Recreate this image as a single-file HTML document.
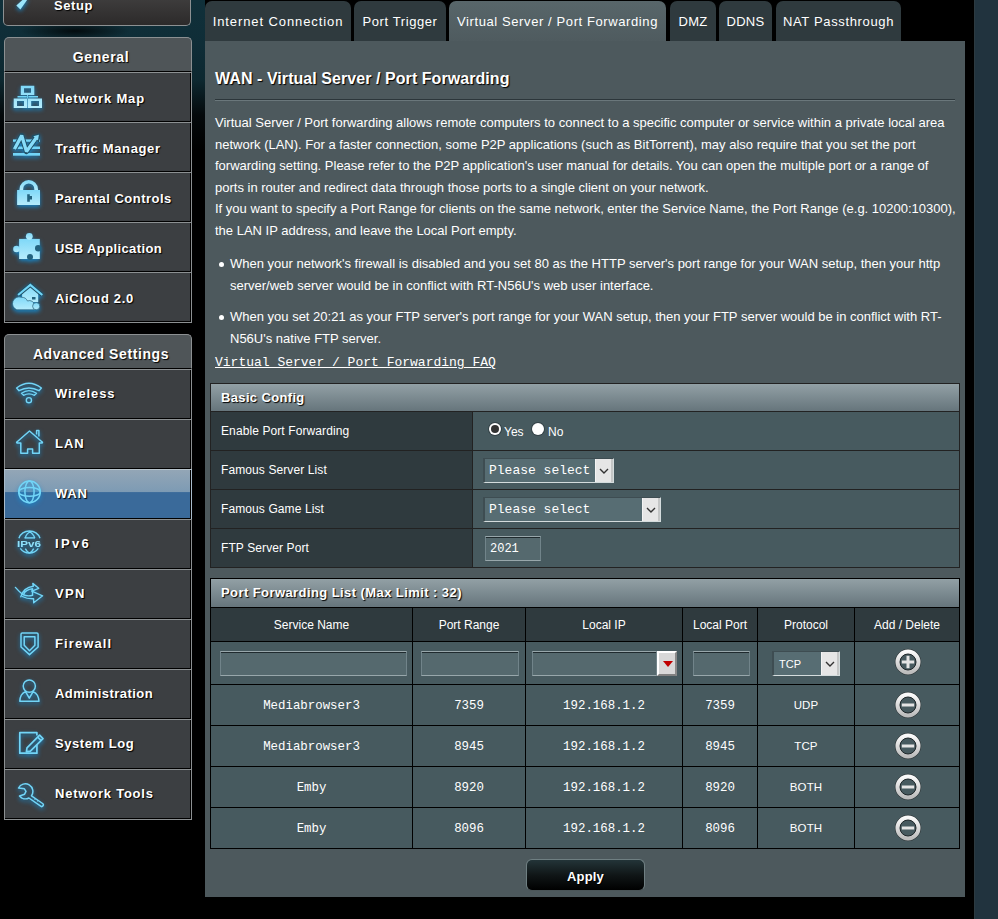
<!DOCTYPE html>
<html><head><meta charset="utf-8">
<style>
*{box-sizing:border-box;}
html,body{margin:0;padding:0;}
body{width:998px;height:919px;overflow:hidden;position:relative;background:#000;font-family:"Liberation Sans",sans-serif;color:#fff;}
.abs{position:absolute;}
#glow{left:0;top:0;width:205px;height:200px;background:radial-gradient(ellipse 55px 9px at 75px 31px,rgba(0,0,0,0.75),rgba(0,0,0,0)),linear-gradient(#10303a 0px,#0f2d37 45px,#0d2830 80px,#04090b 115px,#000 150px);}
#rstrip{left:974px;top:0;width:24px;height:919px;background:#21333e;border-left:1px solid #2c3a40;}
/* menu */
.setup{left:3px;top:-20px;width:188px;height:46px;border:1px solid #8c9092;border-top:none;border-radius:0 0 5px 5px;background:linear-gradient(#4b4a4a,#2c2a2a);}
.grp{left:4px;width:188px;}
.ghead{position:relative;height:35px;border:1px solid #8c9092;border-bottom:1px solid #000;border-radius:5px 5px 0 0;background:#4f5558;text-align:center;font-weight:bold;font-size:14px;line-height:16px;padding-top:11px;padding-left:6px;letter-spacing:0.6px;text-shadow:1px 1px 1px #000;}
.item{position:relative;height:50px;border-top:1px solid #8c9092;border-left:1px solid #8c9092;border-right:1px solid #8c9092;background:#3c3f42;box-shadow:inset -1px -1px 0 #000;}
.item .t{position:absolute;left:50px;top:18px;line-height:15px;font-weight:bold;font-size:13px;letter-spacing:0.45px;text-shadow:1px 1px 1px #000;white-space:nowrap;}
.item svg{position:absolute;left:-1px;top:-1px;width:50px;height:50px;overflow:visible;filter:drop-shadow(0 2px 2px rgba(20,140,210,0.9));}
.item.msel{background:linear-gradient(#93a6b6 0%,#7d9bb4 45%,#3a6a9a 46%,#3a6a9a 100%);border-top-color:#b8c4cc;border-left-color:#a9bccb;border-right-color:#a9bccb;}
.item.glast{border-bottom:1px solid #8c9092;height:51px;}
/* tabs */
.tab{top:1px;height:40px;border-radius:7px 7px 0 0;background:#2f3a3e;font-size:13px;letter-spacing:0.3px;padding-top:13px;text-align:center;white-space:nowrap;color:#fff;}
.tab.on{background:linear-gradient(#58666a 0%,#4f5b5f 100%);}
/* content */
#panel{left:205px;top:41px;width:760px;height:856px;background:#4d595d;}

.p13{font-size:13px;white-space:nowrap;}
#title{left:215px;top:69px;font-size:16px;letter-spacing:0.06px;font-weight:bold;text-shadow:1px 1px 1px #000;white-space:nowrap;line-height:20px;}
#split1{left:215px;top:99px;width:740px;height:1px;background:#2c363a;}
#split2{left:215px;top:100px;width:740px;height:1px;background:#6a777b;}
#desc{left:215px;top:112px;font-size:13px;line-height:21.55px;white-space:nowrap;}
.bul{left:230px;font-size:13px;line-height:22px;white-space:nowrap;}
.dot{width:5px;height:5px;border-radius:50%;background:#fff;}
#faq{left:215px;top:355px;font-family:"Liberation Mono",monospace;font-size:13px;line-height:16px;text-decoration:underline;white-space:nowrap;}
.tb{background:#475a5f;}
.hd{background:linear-gradient(#92a0a5,#66757c);font-weight:bold;font-size:13px;padding-left:10px;text-shadow:1px 1px 1px #000;}
.th{background:#2f3a3e;}
.ln{background:#222;}
.lnb{background:#000;}
.cell{font-size:12px;white-space:nowrap;text-align:center;line-height:15px;}
.mono{font-family:"Liberation Mono",monospace;}

.radio{width:12px;height:12px;border-radius:50%;background:#fff;box-shadow:0 0 0 1px rgba(40,50,55,0.6);}
.radio.on::after{content:"";position:absolute;left:2px;top:2px;width:8px;height:8px;border-radius:50%;background:#333;}
.sel{background:#576d73;border-top:1px solid #3e4d52;border-left:2px solid #3e4d52;border-bottom:1px solid #d4dcdd;border-right:1px solid #d4dcdd;}
.sel .v{position:absolute;left:4px;top:4px;font-family:"Liberation Mono",monospace;font-size:13px;line-height:15px;white-space:nowrap;}
.sbtn{position:absolute;top:0;right:0;width:18px;bottom:0;background:#e6e6e6;border-left:1px solid #f4f4f4;border-right:2px solid #c4c6c6;}
.inp{background:#55696e;border:1px solid #98a7ab;border-left-color:#71848a;border-right-color:#71848a;box-shadow:inset 0 1px 0 #1f2a2e;}
.xbtn{background:#d8d8d8;border-top:2px solid #fff;border-left:2px solid #fff;border-bottom:2px solid #808080;border-right:2px solid #8a8a8a;}
.apply{left:526px;top:859px;width:119px;height:32px;border-radius:6px;background:linear-gradient(#233438 0%,#101617 50%,#000 100%);border:1px solid #6f7f82;border-bottom-color:#4a5558;font-weight:bold;font-size:13px;letter-spacing:0.2px;text-align:center;line-height:33px;text-shadow:1px 1px 0 #000;}
</style></head><body>
<svg width="0" height="0" style="position:absolute"><defs><linearGradient id="icf" x1="0" y1="0" x2="0" y2="1"><stop offset="0" stop-color="#7fd8f8"/><stop offset="1" stop-color="#b5ecfc"/></linearGradient></defs></svg>
<div id="glow" class="abs"></div>
<div id="rstrip" class="abs"></div>

<div class="abs setup"><svg class="abs" style="left:10px;top:15px;overflow:visible;filter:drop-shadow(0 2px 2px rgba(20,140,210,0.9))" width="20" height="16" viewBox="0 -5 20 16"><path d="M2.3 5.4L6.4 9.5L14.5 -2H10.7Z" fill="#9be6fc"/></svg><div class="abs" style="left:50px;top:18px;line-height:15px;font-weight:bold;font-size:13px;letter-spacing:0.6px;text-shadow:1px 1px 1px #000;">Setup</div></div>
<div class="abs grp" style="top:37px;"><div class="ghead">General</div>
<div class="item"><svg viewBox="0 0 50 50"><path fill="url(#icf)" fill-rule="evenodd" d="M16.8 13.8H30.3V23H16.8ZM20 16.2V20.7H27V16.2Z M9.7 26.5H23.2V36H9.7ZM13 29V34H20V29Z M23.8 26.5H38V36H23.8ZM27.2 29V34H35V29Z"/><path fill="#72d5f7" d="M13.5 24H22.8V25.6H13.5ZM24.4 24H34V25.6H24.4ZM23.1 23H24V26.5H23.1Z"/></svg><div class="t" style="letter-spacing:0.82px;top:18px">Network Map</div></div>
<div class="item"><svg viewBox="0 0 50 50"><g fill="#72d5f7"><rect x="9" y="17.4" width="27" height="2.4"/><rect x="9" y="24.5" width="27" height="2.5"/><rect x="9" y="31" width="27" height="2.7"/></g><path d="M10.5 27L17.7 13.6L22.5 29.5L32.3 15.8" fill="none" stroke="#1f4e63" stroke-width="5.2" stroke-linejoin="round"/><path d="M28.8 14.2L35.2 12.4L34.2 19Z" fill="#1f4e63" stroke="#1f4e63" stroke-width="2" stroke-linejoin="round"/><path d="M10.5 27L17.7 13.6L22.5 29.5L32.3 15.8" fill="none" stroke="#86dcf9" stroke-width="3.3" stroke-linejoin="miter" stroke-miterlimit="1.6"/><path d="M29.3 14.3L34.9 12.7L34 18.5Z" fill="#86dcf9"/></svg><div class="t" style="letter-spacing:0.64px;top:18px">Traffic Manager</div></div>
<div class="item"><svg viewBox="0 0 50 50"><path fill="url(#icf)" fill-rule="evenodd" d="M15.5 18.2V17.25A9.25 9.25 0 0 1 34 17.25V18.2ZM19.2 18.2V17A5.55 5.55 0 0 1 30.3 17V18.2Z"/><path fill="url(#icf)" d="M13.1 18H36V33H13.1Z"/><path fill="#23627e" d="M23.2 22.2H25.8V24H28V27.5H25.8V29.8H23.2Z"/></svg><div class="t" style="letter-spacing:0.5px;top:18px">Parental Controls</div></div>
<div class="item"><svg viewBox="0 0 50 50"><g fill="url(#icf)"><rect x="15.1" y="16.9" width="20.7" height="20.1"/><circle cx="25.3" cy="14.3" r="3.4"/><circle cx="12.5" cy="27" r="3.3"/></g><circle cx="34.2" cy="26.3" r="3.2" fill="#23627e"/><circle cx="26" cy="35.1" r="3" fill="#23627e"/></svg><div class="t" style="letter-spacing:0.38px;top:18px">USB Application</div></div>
<div class="item glast"><svg viewBox="0 0 50 50"><path d="M18.1 19V30H34.2V19L26.2 12.6Z" fill="url(#icf)"/><path d="M14.1 23L26.3 13L38.3 23" fill="none" stroke="#1f4e63" stroke-width="4.2"/><path d="M14.1 23L26.3 13L38.3 23" fill="none" stroke="#72d5f7" stroke-width="2.2"/><path d="M28 25H31.5V27.5H28Z" fill="#23627e"/><g fill="url(#icf)" stroke="#2a5f77" stroke-width="0.7"><path d="M12.8 37.8A6.2 6.2 0 0 1 17.5 25.3A6.3 6.3 0 0 1 23.5 29A5 5 0 0 1 30.5 33.2A4.5 4.5 0 0 1 30 37.8Z"/><circle cx="32.2" cy="34.2" r="3.6"/></g></svg><div class="t" style="letter-spacing:0.68px;top:18px">AiCloud 2.0</div></div>
</div>
<div class="abs grp" style="top:334px;"><div class="ghead">Advanced Settings</div>
<div class="item"><svg viewBox="0 0 50 50"><g fill="none" stroke="#72d5f7" stroke-width="1.4" stroke-linejoin="round"><path d="M12.6 19Q24.9 9.6 37.4 19L35 21.7Q24.9 16.3 15 21.7Z"/><path d="M17.5 24.3Q24.9 18.9 32.5 24.3L30.4 26.3Q24.9 23.4 19.6 26.3Z"/><circle cx="24.9" cy="31.2" r="2.6"/></g></svg><div class="t" style="letter-spacing:0.88px;top:16px">Wireless</div></div>
<div class="item"><svg viewBox="0 0 50 50"><g fill="none" stroke="#72d5f7" stroke-width="1.5" stroke-linejoin="round"><path d="M16.8 34.3V24.1H13.2A0.6 0.6 0 0 1 12.9 23L25.5 12L38.2 23A0.6 0.6 0 0 1 37.9 24.1H35.3V34.3H28.6V29.9H23.6V34.3Z"/><path d="M32.6 15.4V11.6H34.9V17.6"/></g></svg><div class="t" style="letter-spacing:0.95px;top:16px">LAN</div></div>
<div class="item msel"><svg viewBox="0 0 50 50"><g fill="none" stroke="#72d5f7" stroke-width="1.5"><circle cx="25.5" cy="22.9" r="10.8"/><ellipse cx="25.5" cy="22.9" rx="4.6" ry="10.8"/><ellipse cx="25.5" cy="22.9" rx="10.8" ry="4.4"/></g></svg><div class="t" style="letter-spacing:0.8px;top:16px">WAN</div></div>
<div class="item"><svg viewBox="0 0 50 50"><g fill="none" stroke="#72d5f7" stroke-width="1.4"><path d="M14.9 19.3A11.3 11.3 0 0 1 36 19.3"/><path d="M16.3 29.4A11 11 0 0 0 34.3 29.4"/><path d="M21.2 19Q22.5 14 27 12.6M30.8 19Q29 14 25 12.6"/><path d="M20.5 18.9H31"/><path d="M21.3 29.6Q23 33 25.5 34.2M29.7 29.6Q28 33 25.5 34.2"/></g><text x="12.9" y="28" font-family="Liberation Sans" font-size="9.6" font-weight="bold" fill="#8ee0fa" textLength="24" lengthAdjust="spacingAndGlyphs">IPv6</text></svg><div class="t" style="letter-spacing:2.3px;top:16px">IPv6</div></div>
<div class="item"><svg viewBox="0 0 50 50"><g fill="none" stroke="#72d5f7" stroke-width="1.4" stroke-linejoin="round" stroke-linecap="round"><path d="M11.4 18.4Q15 22.5 18.5 25.3Q23 27.8 28.6 26.3L28.4 22.4L38.6 26.8L29.7 33.8L29.6 29.8Q23 30 18.3 27.5"/><path d="M16.8 27.8Q19.5 18.5 29.3 17.3L28.8 14.4L34.7 19.3L27.8 22.2L28.6 19.8Q21.5 20.5 19.5 25.5"/></g></svg><div class="t" style="letter-spacing:1.3px;top:16px">VPN</div></div>
<div class="item"><svg viewBox="0 0 50 50"><g fill="none" stroke="#72d5f7" stroke-width="1.5" stroke-linejoin="round"><path d="M17 15.2A1.3 1.3 0 0 1 18.3 13.9H32.8A1.3 1.3 0 0 1 34.1 15.2V28L25.5 35.6L17 28Z"/><path d="M20.2 17.7H30.9V26.3L25.5 31.8L20.2 26.3Z"/></g></svg><div class="t" style="letter-spacing:1.1px;top:16px">Firewall</div></div>
<div class="item"><svg viewBox="0 0 50 50"><g fill="none" stroke="#72d5f7" stroke-width="1.5" stroke-linejoin="round"><circle cx="25.3" cy="17.1" r="6.1"/><path d="M15.8 32.3Q16 25 21.5 22.6L25.3 29.2L29.1 22.6Q34.6 25 35 32.3Z"/></g></svg><div class="t" style="letter-spacing:0.45px;top:16px">Administration</div></div>
<div class="item"><svg viewBox="0 0 50 50"><g fill="none" stroke="#72d5f7" stroke-width="1.7" stroke-linejoin="round"><path d="M32.9 16.5V13.6H15.8V34.2H32.9V25.5"/><path d="M22.4 32.9L23 28.8L35.6 16.2L39 19.6L26.4 32.2Z"/><path d="M33.7 18.1L37.1 21.5"/></g></svg><div class="t" style="letter-spacing:0.56px;top:16px">System Log</div></div>
<div class="item glast"><svg viewBox="0 0 50 50"><g fill="none" stroke="#72d5f7" stroke-width="1.5" stroke-linejoin="round"><path d="M14.5 19A7.6 7.6 0 1 1 27.5 26.8L38.6 34.5A1.65 1.65 0 0 1 36.7 37.2L24.9 29A7.6 7.6 0 0 1 15.5 27L20.6 25.2L22 22.4L20.4 19.8Z"/><path d="M30.6 30.6L31.3 29.6M33.2 32.4L33.9 31.4" stroke-width="1.2"/></g></svg><div class="t" style="letter-spacing:0.78px;top:16px">Network Tools</div></div>
</div>

<div class="abs tab" style="left:205px;width:146px;letter-spacing:0.9px;">Internet Connection</div>
<div class="abs tab" style="left:354px;width:92px;letter-spacing:0.6px;">Port Trigger</div>
<div class="abs tab on" style="left:449px;width:217px;letter-spacing:0.6px;">Virtual Server / Port Forwarding</div>
<div class="abs tab" style="left:670px;width:46px;">DMZ</div>
<div class="abs tab" style="left:719px;width:53px;">DDNS</div>
<div class="abs tab" style="left:776px;width:125px;letter-spacing:0.65px;">NAT Passthrough</div>

<div id="panel" class="abs"></div>

<div id="title" class="abs">WAN - Virtual Server / Port Forwarding</div>
<div id="split1" class="abs"></div><div id="split2" class="abs"></div>
<div id="desc" class="abs">Virtual Server / Port forwarding allows remote computers to connect to a specific computer or service within a private local area<br>network (LAN). For a faster connection, some P2P applications (such as BitTorrent), may also require that you set the port<br>forwarding setting. Please refer to the P2P application's user manual for details. You can open the multiple port or a range of<br>ports in router and redirect data through those ports to a single client on your network.<br>If you want to specify a Port Range for clients on the same network, enter the Service Name, the Port Range (e.g. 10200:10300),<br>the LAN IP address, and leave the Local Port empty.</div>
<div class="abs dot" style="left:219px;top:262px;"></div>
<div class="abs bul" style="top:253px;">When your network's firewall is disabled and you set 80 as the HTTP server's port range for your WAN setup, then your http<br>server/web server would be in conflict with RT-N56U's web user interface.</div>
<div class="abs dot" style="left:219px;top:315px;"></div>
<div class="abs bul" style="top:306px;">When you set 20:21 as your FTP server's port range for your WAN setup, then your FTP server would be in conflict with RT-<br>N56U's native FTP server.</div>
<div id="faq" class="abs">Virtual Server / Port Forwarding FAQ</div>
<div class="abs ln" style="left:210px;top:383px;width:750px;height:185px;"></div>
<div class="abs hd" style="left:211px;top:384px;width:748px;height:27px;line-height:27px;letter-spacing:0.35px;">Basic Config</div>
<div class="abs th" style="left:211px;top:412px;width:261px;height:38px;font-size:12px;line-height:38px;padding-left:10px;letter-spacing:0.1px;white-space:nowrap;">Enable Port Forwarding</div>
<div class="abs tb" style="left:473px;top:412px;width:486px;height:38px;"></div>
<div class="abs th" style="left:211px;top:451px;width:261px;height:38px;font-size:12px;line-height:38px;padding-left:10px;letter-spacing:0.1px;white-space:nowrap;">Famous Server List</div>
<div class="abs tb" style="left:473px;top:451px;width:486px;height:38px;"></div>
<div class="abs th" style="left:211px;top:490px;width:261px;height:38px;font-size:12px;line-height:38px;padding-left:10px;letter-spacing:0.1px;white-space:nowrap;">Famous Game List</div>
<div class="abs tb" style="left:473px;top:490px;width:486px;height:38px;"></div>
<div class="abs th" style="left:211px;top:529px;width:261px;height:38px;font-size:12px;line-height:38px;padding-left:10px;letter-spacing:0.1px;white-space:nowrap;">FTP Server Port</div>
<div class="abs tb" style="left:473px;top:529px;width:486px;height:38px;"></div>
<div class="abs lnb" style="left:210px;top:578px;width:750px;height:271px;"></div>
<div class="abs hd" style="left:211px;top:579px;width:748px;height:28px;line-height:28px;letter-spacing:0.42px;">Port Forwarding List (Max Limit : 32)</div>
<div class="abs th cell" style="left:211px;top:608px;width:201px;height:33px;line-height:35px;">Service Name</div>
<div class="abs th cell" style="left:413px;top:608px;width:112px;height:33px;line-height:35px;">Port Range</div>
<div class="abs th cell" style="left:526px;top:608px;width:156px;height:33px;line-height:35px;">Local IP</div>
<div class="abs th cell" style="left:683px;top:608px;width:74px;height:33px;line-height:35px;">Local Port</div>
<div class="abs th cell" style="left:758px;top:608px;width:96px;height:33px;line-height:35px;">Protocol</div>
<div class="abs th cell" style="left:855px;top:608px;width:104px;height:33px;line-height:35px;">Add / Delete</div>
<div class="abs tb" style="left:211px;top:642px;width:201px;height:42px;"></div>
<div class="abs tb" style="left:413px;top:642px;width:112px;height:42px;"></div>
<div class="abs tb" style="left:526px;top:642px;width:156px;height:42px;"></div>
<div class="abs tb" style="left:683px;top:642px;width:74px;height:42px;"></div>
<div class="abs tb" style="left:758px;top:642px;width:96px;height:42px;"></div>
<div class="abs tb" style="left:855px;top:642px;width:104px;height:42px;"></div>
<div class="abs tb cell mono" style="left:211px;top:685px;width:201px;height:40px;line-height:42px;font-size:12.4px;">Mediabrowser3</div>
<div class="abs tb cell mono" style="left:413px;top:685px;width:112px;height:40px;line-height:42px;font-size:12.4px;">7359</div>
<div class="abs tb cell mono" style="left:526px;top:685px;width:156px;height:40px;line-height:42px;font-size:12.4px;">192.168.1.2</div>
<div class="abs tb cell mono" style="left:683px;top:685px;width:74px;height:40px;line-height:42px;font-size:12.4px;">7359</div>
<div class="abs tb cell" style="left:758px;top:685px;width:96px;height:40px;line-height:40px;font-size:11.5px;letter-spacing:0.1px;">UDP</div>
<div class="abs tb" style="left:855px;top:685px;width:104px;height:40px;line-height:40px;"></div>
<div class="abs tb cell mono" style="left:211px;top:726px;width:201px;height:40px;line-height:42px;font-size:12.4px;">Mediabrowser3</div>
<div class="abs tb cell mono" style="left:413px;top:726px;width:112px;height:40px;line-height:42px;font-size:12.4px;">8945</div>
<div class="abs tb cell mono" style="left:526px;top:726px;width:156px;height:40px;line-height:42px;font-size:12.4px;">192.168.1.2</div>
<div class="abs tb cell mono" style="left:683px;top:726px;width:74px;height:40px;line-height:42px;font-size:12.4px;">8945</div>
<div class="abs tb cell" style="left:758px;top:726px;width:96px;height:40px;line-height:40px;font-size:11.5px;letter-spacing:0.1px;">TCP</div>
<div class="abs tb" style="left:855px;top:726px;width:104px;height:40px;line-height:40px;"></div>
<div class="abs tb cell mono" style="left:211px;top:767px;width:201px;height:40px;line-height:42px;font-size:12.4px;">Emby</div>
<div class="abs tb cell mono" style="left:413px;top:767px;width:112px;height:40px;line-height:42px;font-size:12.4px;">8920</div>
<div class="abs tb cell mono" style="left:526px;top:767px;width:156px;height:40px;line-height:42px;font-size:12.4px;">192.168.1.2</div>
<div class="abs tb cell mono" style="left:683px;top:767px;width:74px;height:40px;line-height:42px;font-size:12.4px;">8920</div>
<div class="abs tb cell" style="left:758px;top:767px;width:96px;height:40px;line-height:40px;font-size:11.5px;letter-spacing:0.1px;">BOTH</div>
<div class="abs tb" style="left:855px;top:767px;width:104px;height:40px;line-height:40px;"></div>
<div class="abs tb cell mono" style="left:211px;top:808px;width:201px;height:40px;line-height:42px;font-size:12.4px;">Emby</div>
<div class="abs tb cell mono" style="left:413px;top:808px;width:112px;height:40px;line-height:42px;font-size:12.4px;">8096</div>
<div class="abs tb cell mono" style="left:526px;top:808px;width:156px;height:40px;line-height:42px;font-size:12.4px;">192.168.1.2</div>
<div class="abs tb cell mono" style="left:683px;top:808px;width:74px;height:40px;line-height:42px;font-size:12.4px;">8096</div>
<div class="abs tb cell" style="left:758px;top:808px;width:96px;height:40px;line-height:40px;font-size:11.5px;letter-spacing:0.1px;">BOTH</div>
<div class="abs tb" style="left:855px;top:808px;width:104px;height:40px;line-height:40px;"></div>

<div class="abs radio on" style="left:489px;top:423px;"></div><div class="abs" style="left:504px;top:425px;font-size:12px;line-height:15px;">Yes</div>
<div class="abs radio" style="left:532px;top:423px;"></div><div class="abs" style="left:548px;top:425px;font-size:12px;line-height:15px;">No</div>
<div class="abs sel" style="left:483px;top:458px;width:131px;height:25px;"><div class="v">Please select</div><div class="sbtn"><svg class="abs" style="left:3px;top:9px" width="10" height="6" viewBox="0 0 10 6"><path d="M1 1L5 5L9 1" fill="none" stroke="#333" stroke-width="1.4"/></svg></div></div>
<div class="abs sel" style="left:483px;top:497px;width:178px;height:25px;"><div class="v">Please select</div><div class="sbtn"><svg class="abs" style="left:3px;top:9px" width="10" height="6" viewBox="0 0 10 6"><path d="M1 1L5 5L9 1" fill="none" stroke="#333" stroke-width="1.4"/></svg></div></div>
<div class="abs inp" style="left:485px;top:536px;width:56px;height:25px;"><div class="abs" style="left:4px;top:5px;font-family:'Liberation Mono',monospace;font-size:12px;line-height:15px;">2021</div></div>
<div class="abs inp" style="left:220px;top:651px;width:187px;height:25px;"></div>
<div class="abs inp" style="left:421px;top:651px;width:98px;height:25px;"></div>
<div class="abs inp" style="left:532px;top:651px;width:125px;height:25px;"></div>
<div class="abs xbtn" style="left:657px;top:651px;width:20px;height:25px;"><svg class="abs" style="left:4px;top:8px" width="10" height="7" viewBox="0 0 10 7"><path d="M0 0H10L5 6Z" fill="#c00000"/></svg></div>
<div class="abs inp" style="left:693px;top:651px;width:57px;height:25px;"></div>
<div class="abs sel" style="left:772px;top:651px;width:68px;height:25px;"><div class="abs" style="left:5px;top:6px;font-size:11px;line-height:13px;">TCP</div><div class="sbtn"><svg class="abs" style="left:3px;top:9px" width="10" height="6" viewBox="0 0 10 6"><path d="M1 1L5 5L9 1" fill="none" stroke="#333" stroke-width="1.4"/></svg></div></div>
<svg width="0" height="0" style="position:absolute"><defs><linearGradient id="rg" x1="0" y1="0" x2="0" y2="1"><stop offset="0" stop-color="#fafafa"/><stop offset="1" stop-color="#bdbdbd"/></linearGradient></defs></svg>
<svg class="abs" style="left:892.5px;top:646.5px" width="30" height="30" viewBox="-15 -15 30 30"><circle r="12.8" fill="none" stroke="#222" stroke-opacity="0.55" stroke-width="1"/><circle r="10.3" fill="none" stroke="url(#rg)" stroke-width="4.4"/><circle r="8" fill="none" stroke="#1e2629" stroke-width="1"/><rect x="-6.2" y="-1.5" width="12.4" height="3" fill="#e4e4e4"/><rect x="-1.5" y="-6.2" width="3" height="12.4" fill="#e4e4e4"/></svg>
<svg class="abs" style="left:892.5px;top:689.7px" width="30" height="30" viewBox="-15 -15 30 30"><circle r="12.8" fill="none" stroke="#222" stroke-opacity="0.55" stroke-width="1"/><circle r="10.3" fill="none" stroke="url(#rg)" stroke-width="4.4"/><circle r="8" fill="none" stroke="#1e2629" stroke-width="1"/><rect x="-6.2" y="-1.5" width="12.4" height="3" fill="#e4e4e4"/></svg>
<svg class="abs" style="left:892.5px;top:730.7px" width="30" height="30" viewBox="-15 -15 30 30"><circle r="12.8" fill="none" stroke="#222" stroke-opacity="0.55" stroke-width="1"/><circle r="10.3" fill="none" stroke="url(#rg)" stroke-width="4.4"/><circle r="8" fill="none" stroke="#1e2629" stroke-width="1"/><rect x="-6.2" y="-1.5" width="12.4" height="3" fill="#e4e4e4"/></svg>
<svg class="abs" style="left:892.5px;top:771.7px" width="30" height="30" viewBox="-15 -15 30 30"><circle r="12.8" fill="none" stroke="#222" stroke-opacity="0.55" stroke-width="1"/><circle r="10.3" fill="none" stroke="url(#rg)" stroke-width="4.4"/><circle r="8" fill="none" stroke="#1e2629" stroke-width="1"/><rect x="-6.2" y="-1.5" width="12.4" height="3" fill="#e4e4e4"/></svg>
<svg class="abs" style="left:892.5px;top:812.7px" width="30" height="30" viewBox="-15 -15 30 30"><circle r="12.8" fill="none" stroke="#222" stroke-opacity="0.55" stroke-width="1"/><circle r="10.3" fill="none" stroke="url(#rg)" stroke-width="4.4"/><circle r="8" fill="none" stroke="#1e2629" stroke-width="1"/><rect x="-6.2" y="-1.5" width="12.4" height="3" fill="#e4e4e4"/></svg>
<div class="abs apply">Apply</div>
</body></html>
